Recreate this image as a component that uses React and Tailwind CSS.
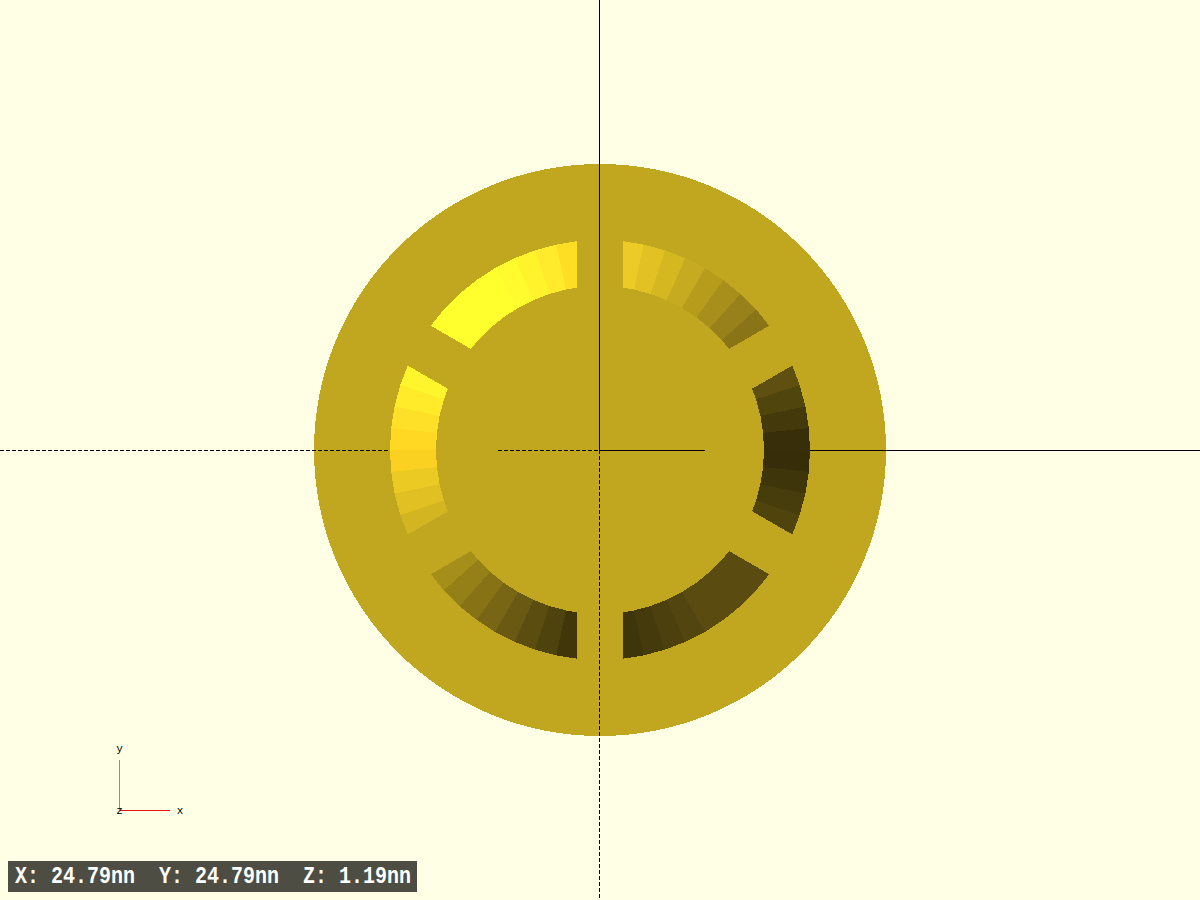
import React from "react";

const cx = 600;
const cy = 450;
const outerR = 210;
const innerR = 164;
const slot = 23;

// colours run clockwise, one per 6 degree facet, one list per ring segment
const segments = [
  ["#edcb26", "#e1c124", "#d5b720", "#c6aa1f", "#b79c1c", "#a88f1b", "#98811a", "#897517"],
  ["#5f5011", "#51450e", "#44390b", "#382e09", "#372e09", "#3f350a", "#473c0c", "#50440d"],
  ["#5a4c10", "#5a4c10", "#5a4c10", "#5a4c10", "#524510", "#4b400e", "#453a0c", "#3f350a"],
  ["#40360a", "#4e420d", "#5b4d0f", "#695912", "#786614", "#877316", "#958018", "#a58e1a"],
  ["#d2b520", "#e0c022", "#ebca23", "#fad120", "#ffd824", "#ffe028", "#ffeb2a", "#fff52c"],
  ["#ffff2e", "#ffff2e", "#ffff2e", "#ffff2e", "#fffb2e", "#fff42c", "#ffeb2b", "#fedd25"],
];

const polar = (r, deg) => {
  const a = (deg * Math.PI) / 180;
  return [cx + r * Math.sin(a), cy - r * Math.cos(a)];
};

const pts = (list) => list.map((p) => p.map((n) => n.toFixed(2)).join(",")).join(" ");

const facetPolys = segments.flatMap((colors, k) => {
  const base = k * 60;
  const outerEdge = (Math.asin(slot / outerR) * 180) / Math.PI;
  const innerEdge = (Math.asin(slot / innerR) * 180) / Math.PI;
  return colors.map((color, i) => {
    const a = base + 6 + i * 6;
    const b = a + 6;
    const o1 = polar(outerR, i === 0 ? base + outerEdge : a);
    const i1 = polar(innerR, i === 0 ? base + innerEdge : a);
    const o2 = polar(outerR, i === 7 ? base + 60 - outerEdge : b);
    const i2 = polar(innerR, i === 7 ? base + 60 - innerEdge : b);
    return { color, points: pts([o1, o2, i2, i1]), key: `${k}-${i}` };
  });
});

const Axes = () => (
  <g shapeRendering="crispEdges" strokeWidth="1" stroke="#000">
    <line x1="599.5" y1="0" x2="599.5" y2="450" />
    <line x1="599.5" y1="450" x2="599.5" y2="900" strokeDasharray="4 2" />
    <line x1="600" y1="450.5" x2="705" y2="450.5" />
    <line x1="810" y1="450.5" x2="1200" y2="450.5" />
    <line x1="0" y1="450.5" x2="388" y2="450.5" strokeDasharray="4 2" />
    <line x1="498" y1="450.5" x2="600" y2="450.5" strokeDasharray="4 2" />
  </g>
);

const AxisGizmo = () => (
  <g>
    <line x1="119.5" y1="760" x2="119.5" y2="810" stroke="#22dd22" shapeRendering="crispEdges" />
    <line x1="120" y1="810.5" x2="170" y2="810.5" stroke="#ee1111" shapeRendering="crispEdges" />
    <g fontFamily="'Liberation Mono', monospace" fontSize="11" fill="#000" textAnchor="middle">
      <text x="119.5" y="752">y</text>
      <text x="119.5" y="814">z</text>
      <text x="180" y="814">x</text>
    </g>
  </g>
);

export default function App() {
  return (
    <div className="relative w-[1200px] h-[900px] overflow-hidden bg-[#ffffe5]">
      <svg width="1200" height="900" viewBox="0 0 1200 900" className="block">
        <circle cx={cx} cy={cy} r="286" fill="#c1a720" shapeRendering="crispEdges" />
        <g shapeRendering="crispEdges">
          {facetPolys.map((f) => (
            <polygon key={f.key} points={f.points} fill={f.color} />
          ))}
        </g>
        <Axes />
        <AxisGizmo />
      </svg>
      <div className="absolute left-2 bottom-2 w-[409px] h-[31px] bg-[#4d4d43] pl-[7px] flex items-center">
        <span className="whitespace-pre text-[20px] leading-none font-bold text-white scale-y-[1.2] font-['Liberation_Mono',monospace]">
          X: 24.79nn  Y: 24.79nn  Z: 1.19nn
        </span>
      </div>
    </div>
  );
}
